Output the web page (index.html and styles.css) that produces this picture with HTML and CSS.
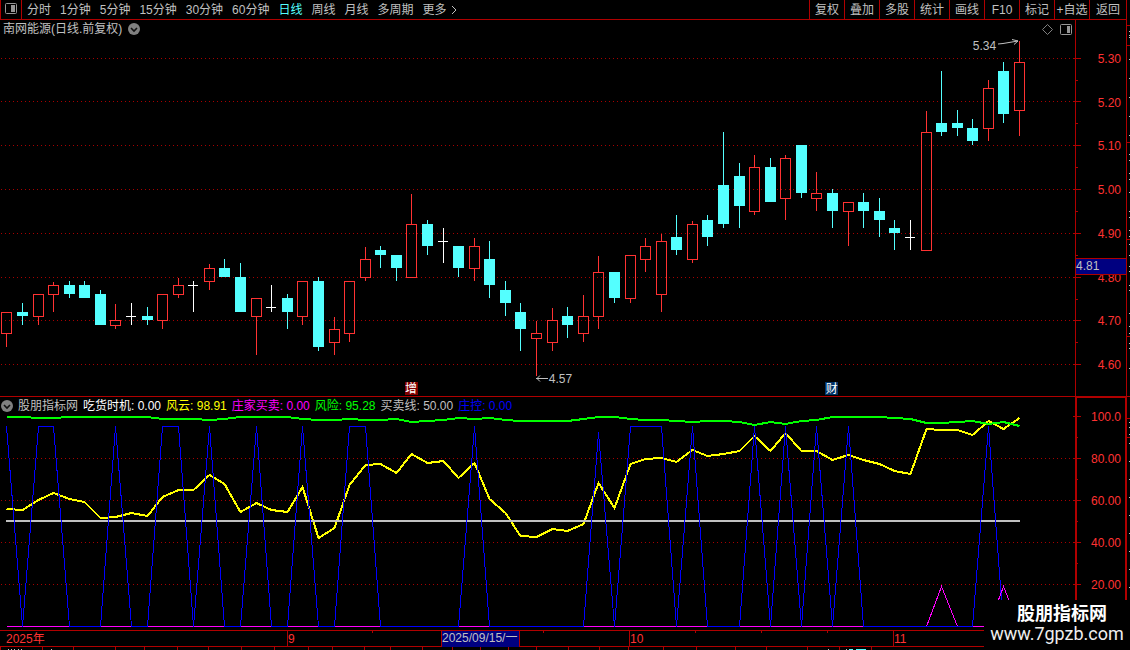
FILE: index.html
```html
<!DOCTYPE html>
<html lang="zh-CN">
<head>
<meta charset="utf-8">
<title>南网能源 日线</title>
<link rel="stylesheet" href="styles.css">
</head>
<body>
<div class="app">
  <header class="toolbar">
    <button class="layout-toggle" aria-label="布局">
      <svg width="12" height="11" viewBox="0 0 12 11"><rect x="0.5" y="0.5" width="11" height="10" rx="1" fill="none" stroke="#969696"/><rect x="6" y="2" width="4" height="7" fill="#969696"/></svg>
    </button>
    <nav class="periods">
      <button>分时</button>
      <button>1分钟</button>
      <button>5分钟</button>
      <button>15分钟</button>
      <button>30分钟</button>
      <button>60分钟</button>
      <button class="active">日线</button>
      <button>周线</button>
      <button>月线</button>
      <button>多周期</button>
      <button class="more">更多<svg width="6" height="10" viewBox="0 0 6 10"><path d="M1 1 L5 5 L1 9" fill="none" stroke="#c0c0c0"/></svg></button>
    </nav>
    <div class="tools">
      <button>复权</button>
      <button>叠加</button>
      <button>多股</button>
      <button>统计</button>
      <button>画线</button>
      <button>F10</button>
      <button>标记</button>
      <button>+自选</button>
      <button class="back">返回</button>
    </div>
  </header>

  <section class="panel price-panel">
    <svg class="plot" id="price" viewBox="0 20 1130 376" preserveAspectRatio="none"></svg>
    <div class="panel-main">
      <div class="title-row">
        <h1 class="title">南网能源(日线.前复权)</h1>
        <button class="fold" aria-label="展开"><svg width="12" height="12" viewBox="0 0 12 12"><circle cx="6" cy="6" r="6" fill="#808080"/><path d="M3 5 L6 8 L9 5" fill="none" stroke="#101010" stroke-width="1.6"/></svg></button>
        <span class="corner-icons">
          <svg width="11" height="11" viewBox="0 0 11 11"><path d="M5.5 0.5 L10.5 5.5 L5.5 10.5 L0.5 5.5 Z" fill="none" stroke="#808080"/></svg>
          <svg width="12" height="11" viewBox="0 0 12 11"><rect x="0.5" y="0.5" width="11" height="10" rx="1" fill="none" stroke="#969696"/><rect x="7" y="2" width="3" height="7" fill="#969696"/></svg>
        </span>
      </div>
      <span class="mark high-mark">5.34<svg width="22" height="9" viewBox="0 0 22 9"><path d="M0 5 L5 4.5 L20 2 M14 0.5 L20 2 L16 5.5" fill="none" stroke="#c0c0c0"/></svg></span>
      <span class="mark low-mark"><svg width="13" height="7" viewBox="0 0 13 7"><path d="M0 3.5 H12 M4 0.5 L1 3.5 L4 6.5" fill="none" stroke="#c0c0c0"/></svg>4.57</span>
      <span class="badge badge-add">增</span>
      <span class="badge badge-fin">财</span>
    </div>
    <div class="axis price-axis">
      <span>5.30</span><span>5.20</span><span>5.10</span><span>5.00</span><span>4.90</span><span>4.80</span><span>4.70</span><span>4.60</span>
      <output class="cursor-price">4.81</output>
    </div>
  </section>

  <section class="panel indicator-panel">
    <svg class="plot" id="indicator" viewBox="0 396 1130 234" preserveAspectRatio="none"></svg>
    <div class="panel-main">
      <div class="legend">
        <button class="fold" aria-label="展开"><svg width="12" height="12" viewBox="0 0 12 12"><circle cx="6" cy="6" r="6" fill="#808080"/><path d="M3 5 L6 8 L9 5" fill="none" stroke="#101010" stroke-width="1.6"/></svg></button>
        <span>股朋指标网</span>
        <span class="white">吃货时机: 0.00</span>
        <span class="yellow">风云: 98.91</span>
        <span class="magenta">庄家买卖: 0.00</span>
        <span class="green">风险: 95.28</span>
        <span>买卖线: 50.00</span>
        <span class="blue">庄控: 0.00</span>
      </div>
    </div>
    <div class="axis indicator-axis">
      <span>100.0</span><span>80.00</span><span>60.00</span><span>40.00</span><span>20.00</span>
    </div>
  </section>

  <footer class="timeline">
    <svg class="plot" id="timeline" viewBox="0 630 1130 20" preserveAspectRatio="none"></svg>
    <div class="dates">
      <span class="year">2025年</span>
      <span class="month">9</span>
      <span class="current">2025/09/15/一</span>
      <span></span>
      <span class="month">10</span>
      <span class="month">11</span>
    </div>
  </footer>

  <aside class="watermark">
    <strong>股朋指标网</strong>
    <span>www.7gpzb.com</span>
  </aside>
</div>
<script src="chart.js"></script>
</body>
</html>
```
FILE: styles.css
```css
* {
  box-sizing: border-box;
}

body {
  margin: 0;
  background: #000;
  color: #c0c0c0;
  font: 12px/14px "Liberation Sans", "Noto Sans CJK SC", sans-serif;
}

button {
  display: flex;
  align-items: center;
  margin: 0;
  padding: 0;
  border: 0;
  background: none;
  color: inherit;
  font: inherit;
  white-space: nowrap;
  cursor: pointer;
}

svg {
  display: block;
  flex: none;
}

.app {
  position: relative;
  display: flex;
  flex-direction: column;
  height: 100vh;
  overflow: hidden;
}

.toolbar {
  display: flex;
  height: 20px;
  border-bottom: 1px solid #b00000;
  margin-right: 3px;
}

.layout-toggle {
  width: 22px;
  justify-content: center;
  border: solid #b00000;
  border-width: 0 1px;
  padding-bottom: 2px;
}

.periods {
  display: flex;
  flex: 1;
  gap: 9px;
  padding-left: 5px;
}

.periods .active {
  color: #54ffff;
}

.more {
  gap: 4px;
}

.tools {
  display: flex;
  border-right: 1px solid #b00000;
}

.tools button {
  width: 35px;
  justify-content: center;
  border-left: 1px solid #b00000;
}

.tools .back {
  width: 37px;
}

.panel {
  position: relative;
  display: grid;
  grid-template-columns: 1076fr 50fr 4fr;
  min-height: 0;
}

.price-panel {
  flex: 376 1 0;
}

.indicator-panel {
  flex: 234 1 0;
}

.plot {
  position: absolute;
  inset: 0;
  width: 100%;
  height: 100%;
  shape-rendering: crispEdges;
}

.panel-main {
  position: relative;
  min-width: 0;
}

.title-row,
.legend {
  display: flex;
  align-items: center;
}

.title-row {
  gap: 6px;
  padding: 2px 4px 0 3px;
}

.title {
  margin: 0;
  font-size: 12px;
  font-weight: 400;
}

.corner-icons {
  display: flex;
  gap: 7px;
  margin-left: auto;
}

.mark {
  position: absolute;
  display: flex;
  align-items: center;
  gap: 2px;
}

.high-mark {
  right: 5.2%;
  top: 5%;
  align-items: flex-start;
}

.low-mark {
  left: 49.8%;
  top: 93.6%;
  gap: 0;
}

.badge {
  position: absolute;
  bottom: 1px;
  width: 13px;
  height: 13px;
  color: #fff;
  line-height: 14px;
  text-align: center;
}

.badge-add {
  left: 37.6%;
  background: #800000;
}

.badge-fin {
  left: 76.7%;
  background: #003366;
}

.axis {
  position: relative;
  display: flex;
  flex-direction: column;
  justify-content: space-between;
  align-items: flex-end;
  padding-right: 5px;
  color: #ff3232;
}

.price-axis {
  padding-top: 32px;
  padding-bottom: 24px;
}

.indicator-axis {
  padding-top: 14px;
  padding-bottom: 38px;
}

.cursor-price {
  position: absolute;
  left: 0;
  right: 0;
  top: 63.3%;
  height: 17px;
  border: solid #b00000;
  border-width: 1px 0;
  background: #000080;
  color: #c0c0c0;
  line-height: 15px;
}

.legend {
  gap: 5px;
  padding: 3px 0 0 1px;
}

.white {
  color: #fff;
}

.yellow {
  color: #ff0;
}

.magenta {
  color: #f0f;
}

.green {
  color: #0f0;
}

.blue {
  color: #00f;
}

.timeline {
  position: relative;
  height: 20px;
}

.dates {
  position: relative;
  display: grid;
  grid-template-columns: 287fr 154fr 79fr 109fr 264fr 237fr;
  height: 17px;
  border: solid #b00000;
  border-width: 1px 0;
  color: #ff3232;
  line-height: 16px;
  white-space: nowrap;
}

.year {
  padding-left: 6px;
}

.month {
  border-left: 1px solid #b00000;
}

.current {
  border: solid #b00000;
  border-width: 0 1px;
  background: #000080;
  color: #c0c0c0;
  line-height: 14px;
}

.watermark {
  position: absolute;
  right: 0;
  bottom: 0;
  width: 146px;
  height: 50px;
  padding-top: 4px;
  background: #000;
  color: #fff;
  font-family: Roboto, "Noto Sans CJK SC", sans-serif;
  font-size: 18px;
  line-height: 20px;
  text-align: center;
  white-space: nowrap;
}

.watermark strong {
  display: block;
  padding-left: 10px;
}

.watermark span {
  color: #eee;
}
```
FILE: chart.js
```js
const RED = '#ff3232';
const CYAN = '#54ffff';
const WHITE = '#ffffff';
const LINE = '#b00000';
const NS = 'http://www.w3.org/2000/svg';

const priceSvg = document.getElementById('price');
const indicatorSvg = document.getElementById('indicator');
const timelineSvg = document.getElementById('timeline');

function add(parent, name, attrs) {
  const node = document.createElementNS(NS, name);
  for (const key in attrs) node.setAttribute(key, attrs[key]);
  parent.appendChild(node);
}

function box(parent, x, y, width, height, fill) {
  add(parent, 'rect', { x, y, width, height, fill });
}

function dots(parent, y) {
  let d = '';
  for (let x = 1; x < 1075; x += 4) d += `M${x} ${y}h1v1h-1z`;
  add(parent, 'path', { d, fill: '#a80000' });
}

const xAt = i => Math.floor(6.87 + i * 15.5785);

// kind, high, body top, body bottom, low
const candles = [
  'r 312 312 334 347', 'c 303 312 316 325', 'r 294 294 317 325', 'r 282 285 295 312', 'c 281 285 294 298',
  'c 281 285 298 298', 'c 290 294 325 325', 'r 304 320 326 329', 'w 303 316 317 325', 'c 307 316 320 325',
  'r 294 294 321 329', 'r 278 285 295 298', 'w 281 285 286 312', 'r 264 268 282 290', 'c 259 268 277 277',
  'c 263 277 312 312', 'r 298 298 317 355', 'w 285 307 308 312', 'c 294 298 312 329', 'r 281 281 317 325',
  'c 277 281 347 351', 'r 317 329 343 355', 'r 281 281 334 342', 'r 247 259 278 281', 'c 246 250 255 268',
  'c 255 255 268 281', 'r 194 224 278 278', 'c 220 224 246 255', 'w 228 241 242 263', 'c 246 246 268 277',
  'r 238 246 269 281', 'c 241 259 285 298', 'c 281 290 303 316', 'c 303 312 329 351', 'r 321 333 339 376',
  'r 308 320 343 351', 'c 307 316 325 338', 'r 295 316 334 342', 'r 256 272 317 329', 'c 272 272 298 303',
  'r 255 255 299 303', 'r 238 246 260 272', 'r 234 241 295 312', 'c 215 237 250 255', 'r 221 224 260 263',
  'c 215 220 237 246', 'c 132 185 224 228', 'c 163 176 206 228', 'r 155 167 212 215', 'c 158 167 202 202',
  'r 155 158 199 220', 'c 145 145 193 198', 'r 172 193 199 211', 'c 189 193 211 228', 'r 202 202 212 246',
  'c 193 202 211 228', 'c 198 211 220 237', 'c 220 228 233 250', 'w 220 237 238 250', 'r 111 132 251 251',
  'c 71 123 132 136', 'c 110 123 128 136', 'c 119 128 141 145', 'r 80 88 129 141', 'c 62 71 114 123',
  'r 41 62 111 136'
];

[58, 101, 145, 189, 233, 277, 320, 364].forEach(y => {
  dots(priceSvg, y);
  box(priceSvg, 1073, y, 8, 1, LINE);
});
[80, 123, 167, 211, 255, 299, 342].forEach(y => box(priceSvg, 1076, y, 2, 1, LINE));
box(priceSvg, 1075, 20, 1, 376, LINE);
box(priceSvg, 1126, 20, 1, 376, LINE);

candles.forEach((text, i) => {
  const [kind, ...values] = text.split(' ');
  const [high, top, bottom, low] = values.map(Number);
  const x = xAt(i);
  const color = { r: RED, c: CYAN, w: WHITE }[kind];
  if (high < top) box(priceSvg, x, high, 1, top - high, color);
  if (low > bottom) box(priceSvg, x, bottom, 1, low - bottom, color);
  if (kind === 'r') {
    add(priceSvg, 'rect', { x: x - 4.5, y: top + 0.5, width: 10, height: bottom - top - 1, fill: 'none', stroke: RED });
  } else {
    box(priceSvg, x - 5, top, kind === 'w' ? 10 : 11, bottom - top, color);
  }
});

// neighbouring quote list, visible only as a sliver at the window edge
[25, 45, 142, 239, 336].forEach(y => box(priceSvg, 1127, y, 3, 1, LINE));
[31, 35, 37, 59, 78, 97, 116, 135, 154, 160, 173, 179, 192, 211, 217, 230, 236, 244, 255, 266, 271, 285, 290, 313, 326, 333, 343, 348, 368]
  .forEach(y => box(priceSvg, 1129, y, 1, 1, '#c0c0c0'));
[418, 437].forEach(y => box(indicatorSvg, 1127, y, 3, 1, LINE));
[422, 427, 434, 443, 461, 479, 497, 515, 533, 551, 569, 587].forEach(y => box(indicatorSvg, 1129, y, 1, 1, '#c0c0c0'));

[458, 500, 542, 584].forEach(y => dots(indicatorSvg, y));
[416, 458, 500, 542, 584].forEach(y => box(indicatorSvg, 1073, y, 8, 1, LINE));
[437, 479, 521, 563].forEach(y => box(indicatorSvg, 1077, y, 1, 1, LINE));
box(indicatorSvg, 0, 396, 1130, 1, LINE);
box(indicatorSvg, 1075, 396, 52, 2, LINE);
box(indicatorSvg, 1075, 396, 2, 234, LINE);
box(indicatorSvg, 1125, 396, 2, 234, LINE);

function line(ys, stroke, width) {
  const points = ys.map((y, i) => (xAt(i) + 0.5) + ',' + y).join(' ');
  add(indicatorSvg, 'polyline', { points, fill: 'none', stroke, 'stroke-width': width });
}

const wind = [
  509, 510, 500, 493, 499, 502, 518, 517, 513, 516, 497, 490, 490, 475, 484, 512, 503, 510, 512, 487,
  538, 528, 485, 465, 464, 473, 454, 463, 461, 478, 463, 499, 513, 536, 537, 529, 531, 524, 483, 508,
  464, 459, 458, 462, 450, 456, 454, 451, 436, 451, 433, 451, 451, 460, 455, 460, 464, 471, 474, 429,
  430, 430, 435, 421, 429, 418
];
const risk = [
  417, 417, 418, 418, 417, 417, 417, 417, 417, 417, 419, 419, 419, 420, 419, 417, 417, 417, 417, 419,
  420, 420, 419, 420, 420, 419, 422, 421, 420, 418, 419, 418, 420, 421, 421, 421, 421, 419, 417, 417,
  419, 420, 420, 421, 422, 421, 421, 422, 425, 422, 424, 421, 420, 417, 417, 417, 417, 418, 419, 423,
  423, 422, 421, 424, 422, 426
];
const peaks = [0, 2, 3, 7, 10, 11, 13, 16, 19, 22, 23, 30, 38, 40, 41, 42, 44, 48, 50, 52, 54, 63];
const control = wind.map((_, i) => i === 38 ? 432.5 : peaks.includes(i) ? 426.5 : 626.5);
const dealer = wind.map((_, i) => i === 60 || i === 64 ? 586.5 : 626.5);

line(wind, '#ffff00', 2);
line(dealer, '#ff00ff', 1);
line(risk, '#00ff00', 2);
box(indicatorSvg, 6, 520, 1014, 2, '#c0c0c0');
line(control, '#0000ff', 1);

[372, 543, 695, 761, 827].forEach(x => box(timelineSvg, x, 631, 1, 2, LINE));
[0, 42, 73, 115, 144, 177, 208, 241, 274, 308, 332, 364, 390, 422, 452, 480, 508, 536, 568, 599, 628, 663, 696, 735, 766, 807, 839, 871]
  .forEach(x => box(timelineSvg, x, 647, 1, 3, LINE));
[8, 11, 14, 18, 21, 51, 828, 846].forEach(x => box(timelineSvg, x, 649, 1, 1, '#c0c0c0'));
[[849, 4], [856, 10]].forEach(([x, w]) => box(timelineSvg, x, 649, w, 1, CYAN));
```
